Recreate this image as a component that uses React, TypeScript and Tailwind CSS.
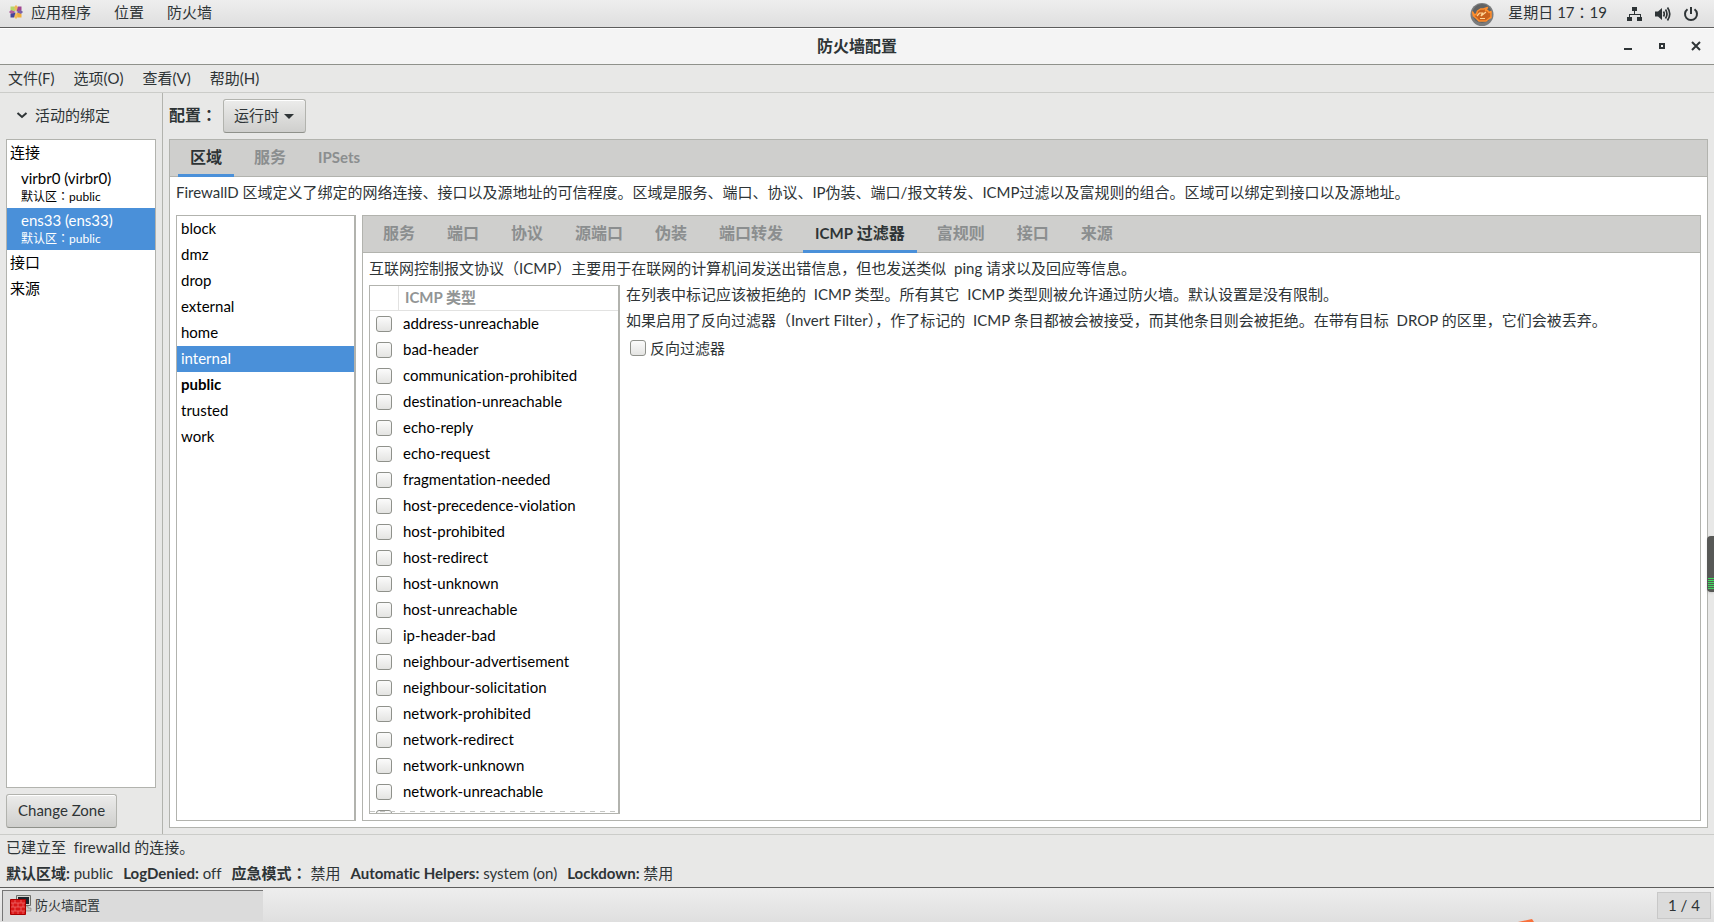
import type { ReactNode } from "react";

const bindings = [
  { name: "virbr0 (virbr0)", zone: "public", selected: false },
  { name: "ens33 (ens33)", zone: "public", selected: true },
];

const zones = ["block", "dmz", "drop", "external", "home", "internal", "public", "trusted", "work"];

const icmpTypes = [
  "address-unreachable",
  "bad-header",
  "communication-prohibited",
  "destination-unreachable",
  "echo-reply",
  "echo-request",
  "fragmentation-needed",
  "host-precedence-violation",
  "host-prohibited",
  "host-redirect",
  "host-unknown",
  "host-unreachable",
  "ip-header-bad",
  "neighbour-advertisement",
  "neighbour-solicitation",
  "network-prohibited",
  "network-redirect",
  "network-unknown",
  "network-unreachable",
];

// Full-width colon, centred in its cell
const Colon = () => <span className="font-['Noto_Sans_CJK_TC']">：</span>;

// Latin word inside a Chinese sentence
const Word = ({ children }: { children: ReactNode }) => <span className="ml-1">{children}</span>;

const mainTabs: ReactNode[] = ["区域", "服务", <span className="text-[15px]">IPSets</span>];

const zoneTabs: ReactNode[] = [
  "服务",
  "端口",
  "协议",
  "源端口",
  "伪装",
  "端口转发",
  <>
    <span className="text-[15px]">ICMP</span> 过滤器
  </>,
  "富规则",
  "接口",
  "来源",
];

const CheckBox = ({ id, label }: { id: string; label?: string }) => (
  <input
    id={id}
    type="checkbox"
    aria-label={label}
    className="block size-4 shrink-0 appearance-none rounded-[3px] border border-[#8f918b] bg-linear-to-b from-[#fbfbfb] to-[#e4e4e2] checked:bg-[#4a90d9]"
  />
);

const Tabs = ({ items, active, label }: { items: ReactNode[]; active: number; label: string }) => (
  <div role="tablist" aria-label={label} className="flex h-[37px] shrink-0 gap-2 border-b border-[#b2b3ae] bg-[#cfcfcd] px-2">
    {items.map((item, index) => (
      <button
        key={index}
        role="tab"
        aria-selected={index === active}
        className={`-mb-px border-b-3 px-3 text-base leading-8 font-bold whitespace-nowrap ${
          index === active ? "border-[#4a90d9] text-[#2e3436]" : "border-transparent text-[#8b8e8f]"
        }`}
      >
        {item}
      </button>
    ))}
  </div>
);

const CentosIcon = () => (
  <svg width="14" height="14" viewBox="0 0 14 14">
    <path d="M7 0l2.500 2.500L7 6.500 4.500 2.500z" fill="#efb95a" />
    <path d="M14 7l-2.500 2.500L7.500 7l4-2.500z" fill="#7a62a8" />
    <path d="M7 14l-2.500-2.500L7 7.500l2.500 4z" fill="#f0bd5c" />
    <path d="M0 7l2.500-2.500L6.500 7l-4 2.500z" fill="#b0609c" />
    <path d="M1.500 1.500h3.500L6.500 6.500 1.500 5z" fill="#b5d568" />
    <path d="M12.500 1.500V5L7.500 6.500 9 1.500z" fill="#a04590" />
    <path d="M12.500 12.500H9L7.500 7.500 12.500 9z" fill="#f2ae3a" />
    <path d="M1.500 12.500V9l5-1.500L5 12.500z" fill="#45449a" />
  </svg>
);

const EngineIcon = () => (
  <svg width="24" height="24" viewBox="0 0 24 24">
    <circle cx="12" cy="12.500" r="11.500" fill="#7b7c7d" />
    <circle cx="12" cy="11.500" r="9.500" fill="#626364" />
    <path
      d="M2.500 10l2 3 2-1 1-3 3-2h3l4-1.500-2 3h2l1.500 2 2-1v6l-2 1-3 2.500H9l-3-3-2.500-2z"
      fill="#c8611c"
      stroke="#ff8f2e"
      strokeWidth="1.500"
      strokeLinejoin="round"
    />
    <path d="M7 14l2.500-3h3l-1.500 3 5-4M10 16.500h5" fill="none" stroke="#ffd596" strokeWidth="1.200" />
  </svg>
);

const NetworkIcon = () => (
  <svg width="16" height="16" viewBox="0 0 16 16" fill="#2e3436">
    <path d="M5 1h5v4H8v3h6v3h1v4h-5v-4h3V9H3v2h2v4H0v-4h2V8h5V5H5z" />
  </svg>
);

const VolumeIcon = () => (
  <svg width="16" height="16" viewBox="0 0 16 16" fill="none" stroke="#2e3436">
    <path d="M0 5.500h3L7 2v12l-4-3.500H0z" fill="#2e3436" stroke="none" />
    <path d="M8.500 5.500q1.500 2.500 0 5M10.500 3.500q3 4.500 0 9M12.500 1.500q4.500 6.500 0 13" strokeWidth="1.700" />
  </svg>
);

const PowerIcon = () => (
  <svg width="16" height="16" viewBox="0 0 16 16" fill="none" stroke="#2e3436" strokeWidth="2">
    <path d="M4.500 3.200a6 6 0 1 0 7 0M8 1v7" />
  </svg>
);

const FirewallIcon = () => (
  <svg width="22" height="20" viewBox="0 0 22 20">
    <path d="M6.500 .5h14v10h-14z" fill="#d5d5cf" stroke="#6e6f6a" />
    <path d="M8 2h11v7H8z" fill="#1c242c" />
    <path d="M12 11h6v2h3v3h-9z" fill="#c9cac5" stroke="#6e6f6a" strokeWidth=".5" />
    <path d="M.5 4.500h15v15H.5z" fill="#d91818" stroke="#a80000" />
    <path
      d="M1 8h14M1 12h14M1 16h14M5 5v3M11 5v3M3 8v4M8 8v4M13 8v4M5 12v4M11 12v4M3 16v3M8 16v3M13 16v3"
      stroke="#ee6a6a"
      strokeWidth=".8"
    />
  </svg>
);

const TopBar = () => (
  <header className="flex h-7 shrink-0 items-center border-b border-[#5d5d5c] bg-linear-to-b from-[#eeeeee] to-[#dfdfdf] pr-[15px] pl-[9px] leading-6">
    <nav className="flex items-center gap-[23px] pb-[3px]">
      <button className="flex items-center gap-2">
        <CentosIcon />
        应用程序
      </button>
      <button>位置</button>
      <button>防火墙</button>
    </nav>
    <div className="ml-auto flex items-center gap-3">
      <EngineIcon />
      <time className="mr-2 ml-[2px] pb-[3px]">
        星期日 17
        <Colon />
        19
      </time>
      <NetworkIcon />
      <VolumeIcon />
      <PowerIcon />
    </div>
  </header>
);

const TitleBar = () => (
  <div className="grid h-[37px] shrink-0 grid-cols-[1fr_auto_1fr] items-center border-t border-b border-t-white border-b-[#8f918b] bg-[#f4f4f4] px-[10px] pb-[2px]">
    <h1 className="col-start-2 text-base leading-6 font-bold">防火墙配置</h1>
    <div className="flex justify-end gap-[18px]">
      <button aria-label="最小化">
        <svg width="16" height="16" viewBox="0 0 16 16">
          <path d="M4 10h8v2H4z" fill="#2e3436" />
        </svg>
      </button>
      <button aria-label="最大化">
        <svg width="16" height="16" viewBox="0 0 16 16">
          <path d="M6 6h4v4H6z" fill="none" stroke="#2e3436" strokeWidth="2" />
        </svg>
      </button>
      <button aria-label="关闭">
        <svg width="16" height="16" viewBox="0 0 16 16">
          <path d="M4 4l8 8M12 4l-8 8" stroke="#2e3436" strokeWidth="2" />
        </svg>
      </button>
    </div>
  </div>
);

const Sidebar = () => (
  <aside className="flex w-[163px] shrink-0 flex-col border-r border-[#b2b3ae] p-[6px]">
    <button className="mb-[6px] flex h-[34px] items-center gap-[7px] pb-[2px] pl-[10px]">
      <svg width="12" height="12" viewBox="0 0 12 12" fill="none" stroke="#2e3436" strokeWidth="2">
        <path d="M1.500 4L6 8l4.500-4" />
      </svg>
      活动的绑定
    </button>
    <ul className="mb-[6px] min-h-0 flex-1 border border-[#b2b3ae] bg-white text-black">
      <li className="px-[3px] pb-[2px]">连接</li>
      {bindings.map((b) => (
        <li key={b.name} className={`h-[42px] px-[14px] pt-[3px] ${b.selected ? "bg-[#4a90d9] text-white" : ""}`}>
          <p className="leading-[18px]">{b.name}</p>
          <p className="text-xs leading-[18px]">
            默认区
            <Colon />
            {b.zone}
          </p>
        </li>
      ))}
      <li className="px-[3px] pb-[2px]">接口</li>
      <li className="px-[3px] pb-[2px]">来源</li>
    </ul>
    <button className="h-[34px] self-start rounded-[3px] border border-[#b2b3ae] border-b-[#8f918b] bg-linear-to-b from-[#ececeb] to-[#cfcfcd] px-[11px] pb-[2px] shadow-[inset_0_1px_white]">
      Change Zone
    </button>
  </aside>
);

const IcmpPanel = () => (
  <div className="flex min-h-0 flex-1 flex-col p-[6px] pt-0">
    <p className="pb-[2px] leading-[30px]">
      互联网控制报文协议（ICMP）主要用于在联网的计算机间发送出错信息，但也发送类似<Word> ping</Word> 请求以及回应等信息。
    </p>
    <div className="flex min-h-0 flex-1 gap-[6px]">
      <div className="relative w-[251px] shrink-0 overflow-hidden border border-r-2 border-[#b2b3ae]">
        <table className="w-full border-separate border-spacing-0">
          <thead>
            <tr className="text-left leading-[22px] text-[#929595]">
              <th className="w-[29px] border-r border-b border-[#e2e2e1]" aria-label="选择"></th>
              <th className="border-b border-[#e2e2e1] px-[6px] pb-[2px] font-bold">ICMP 类型</th>
            </tr>
          </thead>
          <tbody className="text-black">
            {icmpTypes.map((type) => (
              <tr key={type}>
                <td className="pl-[6px]">
                  <CheckBox id={type} />
                </td>
                <td className="pb-[2px] pl-1">
                  <label htmlFor={type}>{type}</label>
                </td>
              </tr>
            ))}
            <tr className="h-[26px]">
              <td className="pl-[6px]">
                <CheckBox id="parameter-problem" label="parameter-problem" />
              </td>
              <td></td>
            </tr>
          </tbody>
        </table>
        <div className="absolute inset-x-0 bottom-px h-px bg-[repeating-linear-gradient(to_right,#c5c6c3_0_5px,transparent_5px_10px)]" />
      </div>
      <div className="min-w-0 flex-1 leading-[26px]">
        <p className="-mt-1">
          在列表中标记应该被拒绝的<Word> ICMP</Word> 类型。所有其它<Word> ICMP</Word> 类型则被允许通过防火墙。默认设置是没有限制。
        </p>
        <p>
          如果启用了反向过滤器（Invert Filter），作了标记的<Word> ICMP</Word> 条目都被会被接受，而其他条目则会被拒绝。在带有目标
          <Word> DROP</Word> 的区里，它们会被丢弃。
        </p>
        <div className="flex items-center gap-1 px-1 pt-[2px]">
          <CheckBox id="invert-filter" />
          <label htmlFor="invert-filter">反向过滤器</label>
        </div>
      </div>
    </div>
  </div>
);

const ZoneList = () => (
  <ul className="w-[180px] shrink-0 border border-r-2 border-[#b2b3ae] text-black">
    {zones.map((zone) => (
      <li
        key={zone}
        className={`px-1 pb-[2px] ${zone === "internal" ? "bg-[#4a90d9] text-white" : ""} ${zone === "public" ? "font-bold" : ""}`}
      >
        {zone}
      </li>
    ))}
  </ul>
);

const StatusBar = () => (
  <footer className="shrink-0 border-t border-[#cbccc9] px-[6px]">
    <p className="pb-[2px]">
      已建立至<Word> firewalld</Word> 的连接。
    </p>
    <p className="flex gap-[10px] pb-[2px]">
      <span>
        <b>默认区域:</b> public
      </span>
      <span>
        <b>LogDenied:</b> off
      </span>
      <span>
        <b>
          应急模式
          <Colon />
        </b>{" "}
        禁用
      </span>
      <span>
        <b>Automatic Helpers:</b> system (on)
      </span>
      <span>
        <b>Lockdown:</b> 禁用
      </span>
    </p>
  </footer>
);

const Taskbar = () => (
  <div className="relative flex h-[35px] shrink-0 items-center justify-between border-t border-[#5d5d5c] bg-linear-to-b from-[#eeeeee] to-[#dfdfdf] pr-[3px] pl-[2px]">
    <button className="flex h-[31px] w-[261px] items-center gap-[3px] border-t border-l border-[#767676] bg-[#dbdbdb] pb-[2px] pl-[7px] text-[13px]">
      <FirewallIcon />
      防火墙配置
    </button>
    <button className="h-[27px] w-[54px] border border-[#c8c8c8] bg-[#dbdbdb] pb-[2px] whitespace-pre">1 / 4</button>
    <svg className="absolute right-[180px] bottom-0" width="16" height="3" viewBox="0 0 16 3">
      <path d="M0 3L14 0l2 3z" fill="#f9713c" />
    </svg>
  </div>
);

const App = () => {
  return (
    <div className="relative flex h-screen flex-col overflow-hidden bg-[#e8e8e7] font-['Lato','Noto_Sans_CJK_SC',sans-serif] text-[15px] leading-6 text-[#2e3436] [font-variant-ligatures:none]">
      <TopBar />
      <TitleBar />
      <nav className="flex h-7 shrink-0 items-center gap-[19px] border-b border-[#cbccc9] px-2 pb-[2px]">
        <button>文件(F)</button>
        <button>选项(O)</button>
        <button>查看(V)</button>
        <button>帮助(H)</button>
      </nav>
      <div className="flex min-h-0 flex-1">
        <Sidebar />
        <main className="flex min-w-0 flex-1 flex-col p-[6px]">
          <div className="flex h-10 shrink-0 items-start">
            <label htmlFor="config" className="text-base leading-[30px] font-bold">
              配置
              <Colon />
            </label>
            <div className="relative ml-[6px]">
              <select
                id="config"
                className="h-[34px] w-[83px] appearance-none rounded-[3px] border border-[#b2b3ae] border-b-[#8f918b] bg-linear-to-b from-[#ececeb] to-[#cfcfcd] pb-[2px] pl-[10px] shadow-[inset_0_1px_white]"
              >
                <option>运行时</option>
                <option>永久</option>
              </select>
              <svg className="pointer-events-none absolute top-[15px] right-3" width="10" height="5" viewBox="0 0 10 5">
                <path d="M0 0h10L5 5z" fill="#2e3436" />
              </svg>
            </div>
          </div>
          <section className="flex min-h-0 flex-1 flex-col border border-[#b2b3ae] bg-white">
            <Tabs items={mainTabs} active={0} label="配置" />
            <p className="h-[38px] shrink-0 px-[6px] leading-[30px] whitespace-nowrap">
              FirewallD 区域定义了绑定的网络连接、接口以及源地址的可信程度。区域是服务、端口、协议、IP伪装、端口/报文转发、ICMP过滤以及富规则的组合。区域可以绑定到接口以及源地址。
            </p>
            <div className="flex min-h-0 flex-1 gap-[6px] px-[6px] pb-[6px]">
              <ZoneList />
              <div className="flex min-w-0 flex-1 flex-col border border-[#b2b3ae]">
                <Tabs items={zoneTabs} active={6} label="区域" />
                <IcmpPanel />
              </div>
            </div>
          </section>
        </main>
      </div>
      <StatusBar />
      <Taskbar />
      {/* Level meter docked to the screen edge */}
      <div className="absolute top-[536px] right-0 flex h-14 w-[7px] flex-col justify-end rounded-l bg-[#575856] pb-[2px] pl-px shadow">
        <div className="h-3 bg-[repeating-linear-gradient(to_bottom,#3ddc5c_0_1px,#575856_1px_2px)]" />
      </div>
    </div>
  );
};

export default App;
